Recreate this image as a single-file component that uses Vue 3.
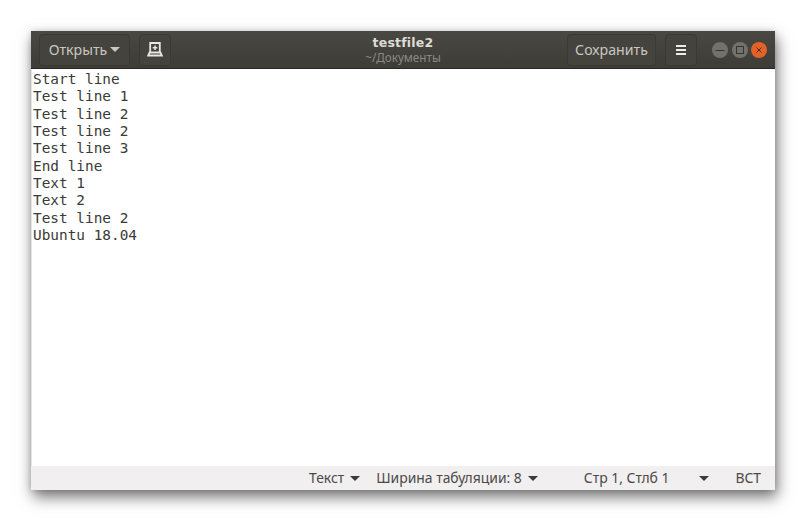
<script setup>
const lines = ['Start line','Test line 1','Test line 2','Test line 2','Test line 3','End line','Text 1','Text 2','Test line 2','Ubuntu 18.04']
</script>

<template>
  <div class="desk">
    <div class="win">
      <header class="head">
        <button class="btn open">Открыть<span class="caret light"></span></button>
        <button class="btn pin" aria-label="new">
          <svg width="16" height="15" viewBox="0 0 16 15"><path d="M3.2 1h9.6v9.5H3.2zM2.6 10.5h10.8l1.4 3H1.2z" fill="none" stroke="#e8e6e0" stroke-width="1.8"/><path d="M8 3.4v4.6M5.7 5.7h4.6" stroke="#e8e6e0" stroke-width="1.5"/></svg>
        </button>
        <div class="title">
          <div class="t1">testfile2</div>
          <div class="t2">~/Документы</div>
        </div>
        <button class="btn save">Сохранить</button>
        <button class="btn menu" aria-label="menu">
          <svg width="10" height="10" viewBox="0 0 10 10"><path d="M0 1h10M0 5h10M0 9h10" stroke="#eeece6" stroke-width="2"/></svg>
        </button>
        <div class="wc">
          <span class="dot"><svg width="16" height="16" viewBox="0 0 16 16"><path d="M3.5 8.5h9" stroke="#35342f" stroke-width="1"/></svg></span>
          <span class="dot"><svg width="16" height="16" viewBox="0 0 16 16"><rect x="4.5" y="4.5" width="7" height="7" fill="none" stroke="#35342f"/></svg></span>
          <span class="dot close"><svg width="16" height="16" viewBox="0 0 16 16"><path d="M5.5 5.5l5 5M10.5 5.5l-5 5" stroke="#5c2a14" stroke-width="1"/></svg></span>
        </div>
      </header>
      <main class="edit">
        <div v-for="(l, i) in lines" :key="i" class="ln">{{ l }}</div>
      </main>
      <footer class="stat">
        <span class="s s1">Текст<span class="caret"></span></span>
        <span class="s s2">Ширина табуляции: 8<span class="caret"></span></span>
        <span class="s s3">Стр 1, Стлб 1</span>
        <span class="caret s4"></span>
        <span class="s s5">ВСТ</span>
      </footer>
    </div>
  </div>
</template>

<style>
html, body { margin: 0; background: #fff; }
</style>

<style scoped>
.desk { width: 807px; height: 521px; padding: 31px 32px 31px 31px; box-sizing: border-box; background: #fff; overflow: hidden; }
.win { height: 459px; display: flex; flex-direction: column; background: #fff; box-shadow: 2px 7px 14px rgba(0,0,0,.55), 0 0 6px rgba(0,0,0,.14); }
.head { height: 38px; flex: none; box-sizing: border-box; display: flex; align-items: center; padding: 2px 8px 2px 8px; background: linear-gradient(#4a4842, #3e3c37); border-bottom: 1px solid #2a2925; font-family: "Noto Sans", "Open Sans", sans-serif; }
.btn { height: 32px; box-sizing: border-box; border: 1px solid #3a3934; border-radius: 4px; background: #45433d; color: #c9c7c0; font: 14.2px "Noto Sans", sans-serif; padding: 0; display: flex; align-items: center; justify-content: center; }
.open { width: 91px; }
.pin { width: 32px; margin-left: 9px; }
.title { flex: 1; text-align: center; padding-left: 68px; line-height: 15px; }
.t1 { font: bold 12.5px/15px "DejaVu Sans", sans-serif; color: #dedcd6; letter-spacing: .2px; }
.t2 { font-size: 11.7px; line-height: 15px; color: #8b8981; }
.save { width: 89px; }
.menu { width: 32px; margin-left: 9px; }
.wc { display: flex; gap: 3.5px; margin-left: 9px; padding-left: 5px; border-left: 1px solid #44423d; height: 16px; }
.dot { width: 16px; height: 16px; border-radius: 50%; background: #72716b; display: block; }
.dot svg { display: block; }
.close { background: #e2622a; }
.caret { display: inline-block; width: 0; height: 0; border: 5px solid transparent; border-top: 5px solid #3c3b37; border-bottom: 0; margin-left: 6px; vertical-align: 2px; }
.caret.light { border-top-color: #c9c7c0; margin-left: 3px; border-left-width: 5.5px; border-right-width: 5.5px; }
.edit { flex: 1; padding: 2px 0 0 1px; font: 14.4px/17.35px "DejaVu Sans Mono", monospace; color: #3a3a37; border-left: 1px solid #e4e4e4; }
.ln { height: 17.35px; white-space: pre; }
.stat { height: 24px; flex: none; position: relative; background: #f1eff0; font: 13.9px/24px "Noto Sans", sans-serif; color: #4a4a46; display: flex; align-items: center; }
.s { white-space: nowrap; }
.s1 { margin-left: 278px; }
.s2 { margin-left: 16px; }
.s3 { margin-left: 46px; }
.s4 { margin-left: 30px; }
.s5 { margin-left: 26px; }
</style>
